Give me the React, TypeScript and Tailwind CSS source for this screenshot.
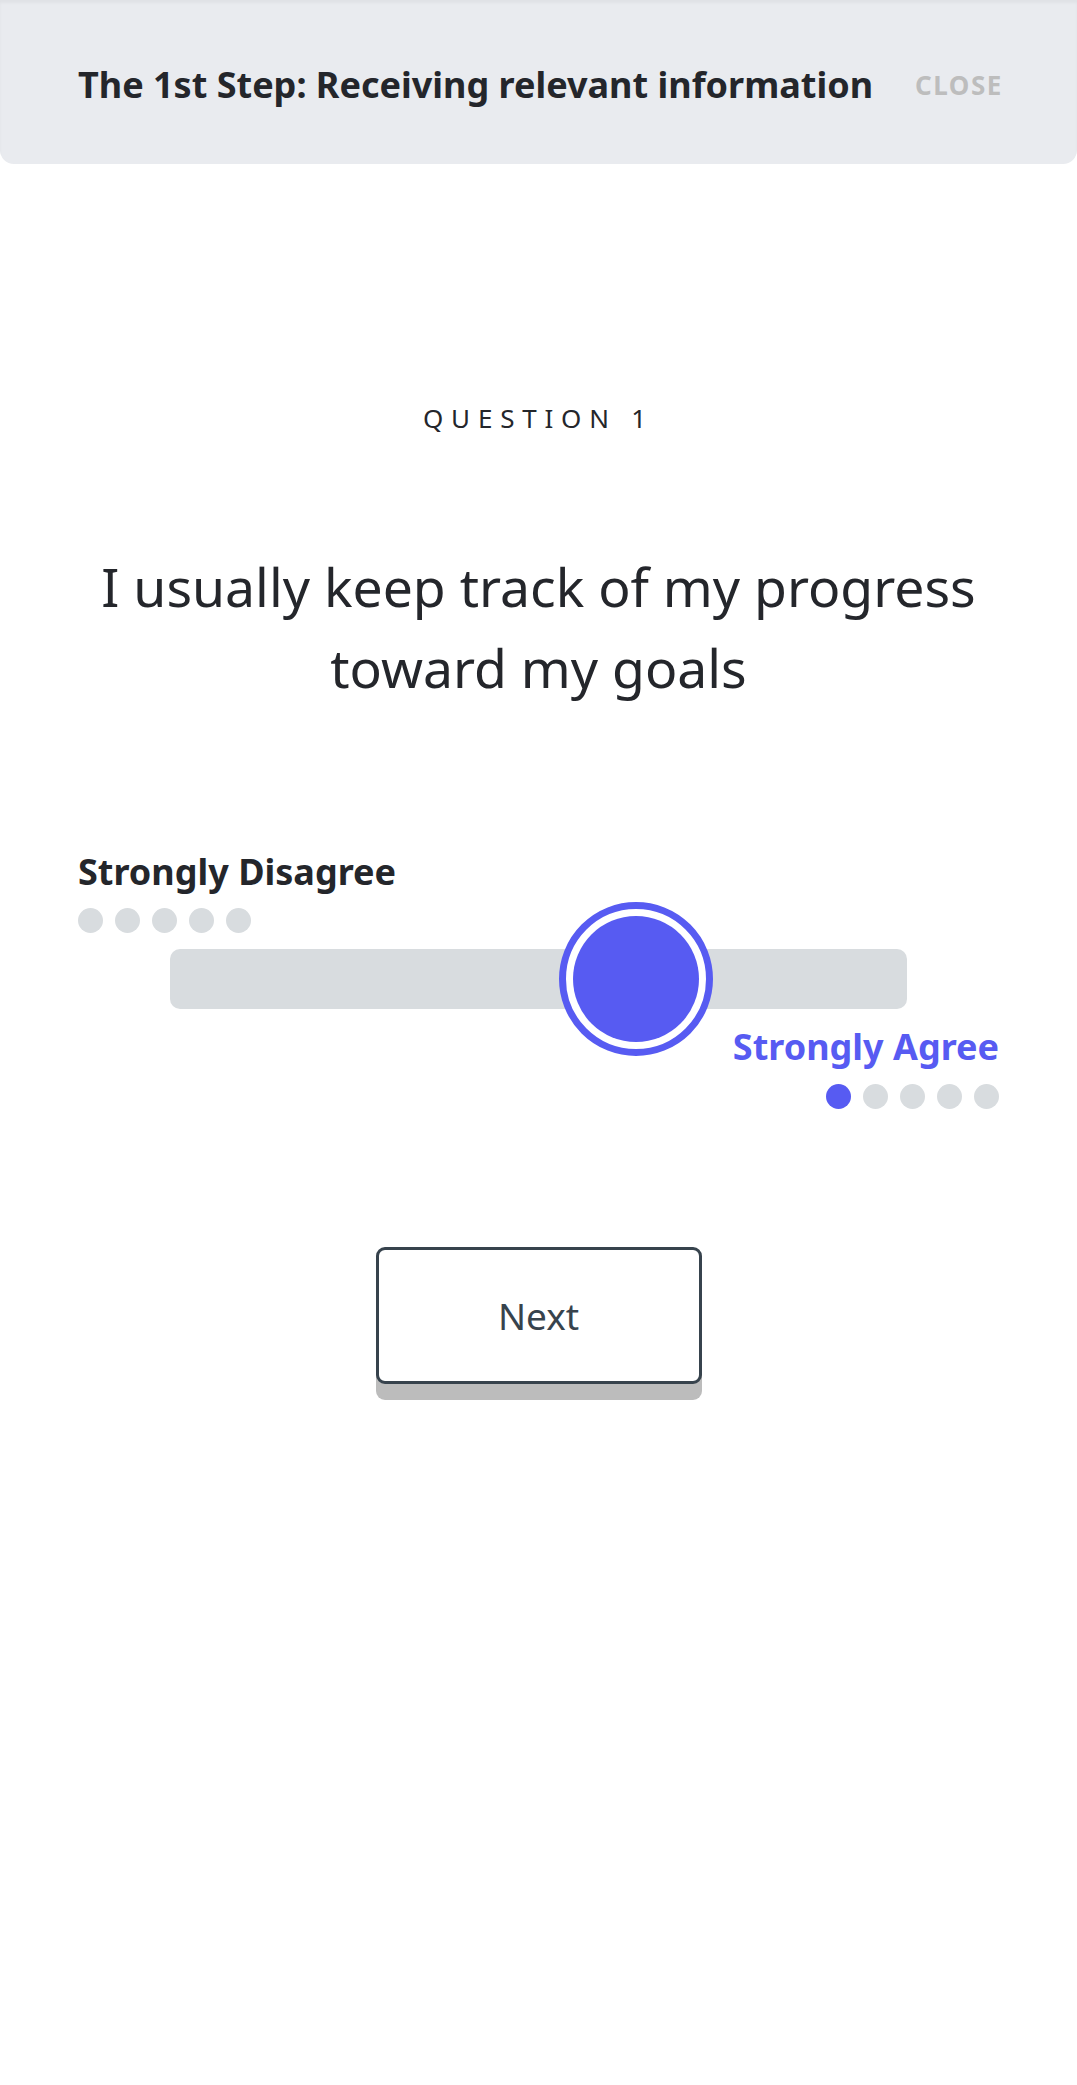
import React from 'react';

const BLUE = 'bg-[#575bf2]';

function Dots({ active }: { active?: number }) {
  return (
    <div className="flex gap-[12px]">
      {[0, 1, 2, 3, 4].map((i) => (
        <span
          key={i}
          className={`block w-[25px] h-[25px] rounded-full ${i === active ? BLUE : 'bg-[#d8dcdf]'}`}
        />
      ))}
    </div>
  );
}

export default function App() {
  return (
    <div
      className="min-h-[2085px] bg-white text-[#24262b]"
      style={{ fontFamily: '"Noto Sans", "Open Sans", sans-serif' }}
    >
      <header className="h-[164px] bg-[#e9ebef] rounded-b-[14px] shadow-[inset_0_3px_3px_rgba(0,0,0,0.04)] flex items-center justify-between pl-[78px] pr-[74px] pt-[5px]">
        <h1 className="text-[36px] font-bold leading-none">The 1st Step: Receiving relevant information</h1>
        <button className="text-[26px] font-bold tracking-[0.06em] text-[#bdbdbd] leading-none">CLOSE</button>
      </header>

      <main className="px-[78px]">
        <p className="mt-[239px] text-center text-[26px] leading-[30px] tracking-[0.3em] text-[#24262b]">
          QUESTION 1
        </p>

        <h2 className="mt-[113px] text-center text-[53.5px] leading-[81px] font-normal">
          I usually keep track of my progress
          <br />
          toward my goals
        </h2>

        <div className="mt-[144px]">
          <p className="text-[36px] leading-[40px] font-bold">Strongly Disagree</p>
          <div className="mt-[16px]">
            <Dots />
          </div>

          <div className="relative mt-[16px] mx-[92px] h-[60px] rounded-[10px] bg-[#d8dcdf]">
            <div className="absolute left-[389px] top-[-47px] w-[154px] h-[154px] rounded-full border-[7px] border-[#575bf2] bg-white p-[7px]">
              <div className={`w-full h-full rounded-full ${BLUE}`} />
            </div>
          </div>

          <div className="flex flex-col items-end">
            <p className="mt-[18px] text-[36px] leading-[40px] font-bold text-[#575bf2]">Strongly Agree</p>
            <div className="mt-[17px]">
              <Dots active={0} />
            </div>
          </div>
        </div>

        <div className="mt-[138px] flex justify-center">
          <button className="w-[326px] h-[137px] rounded-[9px] border-[3px] border-[#37434d] bg-white text-[37px] text-[#37434d] shadow-[0_16px_0_#bcbcbc]">
            Next
          </button>
        </div>
      </main>
    </div>
  );
}
